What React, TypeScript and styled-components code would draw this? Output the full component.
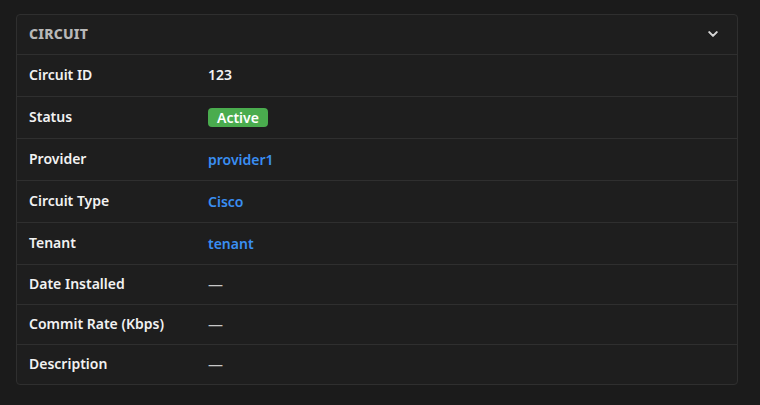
import React from "react";
import styled, { createGlobalStyle } from "styled-components";

const Global = createGlobalStyle`
  html, body { margin: 0; padding: 0; background: #1b1b1b; }
  body { font-family: "Noto Sans", "Open Sans", sans-serif; }
`;

const Page = styled.div`
  width: 760px;
  height: 405px;
  box-sizing: border-box;
  padding: 14px 22px 0 16px;
  background: #1b1b1b;
`;

const Card = styled.section`
  border: 1px solid #2f2f2f;
  border-radius: 4px;
  background: #1e1e1e;
  overflow: hidden;
`;

const Header = styled.div`
  height: 39px;
  display: flex;
  align-items: center;
  justify-content: space-between;
  padding: 0 18px 2px 12px;
  box-sizing: border-box;
  border-bottom: 1px solid #2f2f2f;
  height: 40px;
`;

const Title = styled.h5`
  margin: 0;
  font-size: 14px;
  font-weight: 800;
  color: #b8b8b8;
  letter-spacing: 0.2px;
`;

const Row = styled.div<{ $h: number; $last?: boolean }>`
  display: grid;
  grid-template-columns: 179px 1fr;
  align-items: center;
  height: ${(p) => p.$h}px;
  padding: 0 12px 2px;
  box-sizing: border-box;
  border-bottom: ${(p) => (p.$last ? "none" : "1px solid #2f2f2f")};
`;

const Label = styled.div`
  font-size: 14px;
  font-weight: 600;
  color: #f2f2f2;
`;

const Value = styled.div`
  font-size: 14px;
  font-weight: 600;
  color: #f2f2f2;
`;

const Link = styled.a`
  font-size: 14px;
  font-weight: 600;
  color: #3a8ef2;
  text-decoration: none;
`;

const Badge = styled.span`
  display: inline-block;
  background: #4aac4e;
  color: #ffffff;
  font-size: 14px;
  font-weight: 600;
  line-height: 19px;
  padding: 0 9px;
  border-radius: 4px;
`;

const Dash = styled.span`
  color: #c8c8c8;
  font-size: 15px;
`;

const Chevron = () => (
  <svg width="12" height="12" viewBox="0 0 16 16" fill="none">
    <path d="M3 5.5l5 5 5-5" stroke="#d4d4d4" strokeWidth="2.8" strokeLinecap="round" strokeLinejoin="round" />
  </svg>
);

export default function App() {
  return (
    <>
      <Global />
      <Page>
        <Card>
          <Header>
            <Title>CIRCUIT</Title>
            <Chevron />
          </Header>
          <Row $h={42}>
            <Label>Circuit ID</Label>
            <Value>123</Value>
          </Row>
          <Row $h={42}>
            <Label>Status</Label>
            <div><Badge>Active</Badge></div>
          </Row>
          <Row $h={42}>
            <Label>Provider</Label>
            <div><Link href="#">provider1</Link></div>
          </Row>
          <Row $h={42}>
            <Label>Circuit Type</Label>
            <div><Link href="#">Cisco</Link></div>
          </Row>
          <Row $h={42}>
            <Label>Tenant</Label>
            <div><Link href="#">tenant</Link></div>
          </Row>
          <Row $h={40}>
            <Label>Date Installed</Label>
            <Dash>—</Dash>
          </Row>
          <Row $h={40}>
            <Label>Commit Rate (Kbps)</Label>
            <Dash>—</Dash>
          </Row>
          <Row $h={39} $last>
            <Label>Description</Label>
            <Dash>—</Dash>
          </Row>
        </Card>
      </Page>
    </>
  );
}
